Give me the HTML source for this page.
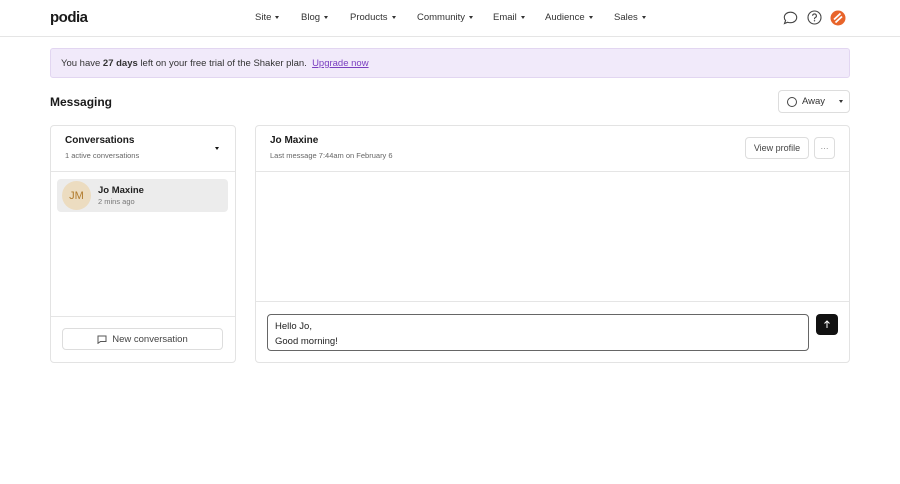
<!DOCTYPE html>
<html><head><meta charset="utf-8"><style>
*{box-sizing:border-box;margin:0;padding:0}
body{width:900px;height:484px;background:#fff;font-family:"Liberation Sans",sans-serif;color:#1a1a1a;position:relative;overflow:hidden}
.abs{position:absolute}
.nav{font-size:9.5px;color:#333;top:12px}
.car{display:inline-block;width:0;height:0;border-left:2.5px solid transparent;border-right:2.5px solid transparent;border-top:3px solid #333;margin-left:4px;vertical-align:middle}
.panel{border:1px solid #e3e3e3;border-radius:4px;background:#fff}
.btn{border:1px solid #ddd;border-radius:4px;background:#fff;font-size:9px;color:#444;display:flex;align-items:center;justify-content:center}
</style></head><body>
<div class="abs" style="left:50px;top:9px;font-size:15px;font-weight:bold;letter-spacing:-0.5px">podia</div>
<div class="abs nav" style="left:255px">Site<span class="car"></span></div>
<div class="abs nav" style="left:301px">Blog<span class="car"></span></div>
<div class="abs nav" style="left:350px">Products<span class="car"></span></div>
<div class="abs nav" style="left:417px">Community<span class="car"></span></div>
<div class="abs nav" style="left:493px">Email<span class="car"></span></div>
<div class="abs nav" style="left:545px">Audience<span class="car"></span></div>
<div class="abs nav" style="left:614px">Sales<span class="car"></span></div>
<svg class="abs" style="left:783px;top:11px" width="15" height="14" viewBox="0 0 15 14"><path d="M7.5 1.2C4 1.2 1.3 3.5 1.3 6.4c0 1.2.5 2.3 1.3 3.1L1.5 12.5l3.2-1.3c.9.4 1.8.5 2.8.5 3.5 0 6.2-2.3 6.2-5.2S11 1.2 7.5 1.2z" fill="none" stroke="#444" stroke-width="1.1"/></svg>
<svg class="abs" style="left:807px;top:10px" width="15" height="15" viewBox="0 0 15 15"><circle cx="7.5" cy="7.5" r="6.5" fill="none" stroke="#444" stroke-width="1.1"/><path d="M5.6 5.8a1.9 1.9 0 1 1 2.6 1.8c-.5.2-.7.6-.7 1.1v.6" fill="none" stroke="#444" stroke-width="1.1"/><circle cx="7.5" cy="10.8" r=".7" fill="#444"/></svg>
<svg class="abs" style="left:830px;top:10px" width="16" height="16" viewBox="0 0 16 16"><circle cx="8" cy="8" r="7.5" fill="#e8642a"/><path d="M10.5 3.5L4 9.5M12 6.5L5.5 12.5" stroke="#fff" stroke-width="1.8"/></svg>
<div class="abs" style="left:0;top:36px;width:900px;height:1px;background:#e5e5e5"></div>
<div class="abs" style="left:50px;top:48px;width:800px;height:30px;background:#f1eafa;border:1px solid #e2d6f1;border-radius:3px;font-size:9.5px;color:#333;padding:9px 0 0 10px">You have <b>27 days</b> left on your free trial of the Shaker plan. &nbsp;<span style="color:#7a3fc0;text-decoration:underline">Upgrade now</span></div>
<div class="abs" style="left:50px;top:95px;font-size:12px;font-weight:bold">Messaging</div>
<div class="abs btn" style="left:778px;top:90px;width:72px;height:23px;justify-content:flex-start;padding-left:8px;font-size:9.5px;color:#333"><span style="width:10px;height:10px;border:1px solid #444;border-radius:50%;margin-right:5px"></span>Away<span class="car" style="margin-left:14px"></span></div>
<div class="abs panel" style="left:50px;top:125px;width:186px;height:238px"></div>
<div class="abs" style="left:65px;top:135px;font-size:10px;font-weight:bold">Conversations</div>
<div class="abs" style="left:65px;top:151px;font-size:7.5px;color:#666">1 active conversations</div>
<span class="abs car" style="left:215px;top:147px;margin:0;border-top-color:#111"></span>
<div class="abs" style="left:51px;top:171px;width:184px;height:1px;background:#e5e5e5"></div>
<div class="abs" style="left:57px;top:179px;width:171px;height:33px;background:#ececec;border-radius:4px"></div>
<div class="abs" style="left:62px;top:181px;width:29px;height:29px;border-radius:50%;background:#ecdcc0;color:#b07a2c;font-size:11px;display:flex;align-items:center;justify-content:center">JM</div>
<div class="abs" style="left:98px;top:185px;font-size:9.5px;font-weight:bold;color:#222">Jo Maxine</div>
<div class="abs" style="left:98px;top:197px;font-size:7.5px;color:#777">2 mins ago</div>
<div class="abs" style="left:51px;top:316px;width:184px;height:1px;background:#e5e5e5"></div>
<div class="abs btn" style="left:62px;top:328px;width:161px;height:22px;font-size:9.5px"><svg width="10" height="9" viewBox="0 0 10 9" style="margin-right:5px"><path d="M1 1h8v5.5H3.5L1 8.3z" fill="none" stroke="#555" stroke-width="1"/></svg>New conversation</div>
<div class="abs panel" style="left:255px;top:125px;width:595px;height:238px"></div>
<div class="abs" style="left:270px;top:135px;font-size:10px;font-weight:bold">Jo Maxine</div>
<div class="abs" style="left:270px;top:151px;font-size:7.5px;color:#666">Last message 7:44am on February 6</div>
<div class="abs btn" style="left:745px;top:137px;width:64px;height:22px">View profile</div>
<div class="abs btn" style="left:814px;top:137px;width:21px;height:22px;font-size:8px;color:#777">···</div>
<div class="abs" style="left:256px;top:171px;width:593px;height:1px;background:#e5e5e5"></div>
<div class="abs" style="left:256px;top:301px;width:593px;height:1px;background:#e5e5e5"></div>
<div class="abs" style="left:267px;top:314px;width:542px;height:37px;border:1.5px solid #666;border-radius:4px;font-size:9.5px;color:#222;padding:4px 0 0 7px;line-height:15px">Hello Jo,<br>Good morning!</div>
<div class="abs" style="left:816px;top:314px;width:22px;height:21px;background:#111;border-radius:4px;display:flex;align-items:center;justify-content:center"><svg width="8" height="9" viewBox="0 0 8 9"><path d="M4 8V1M1.5 3.5L4 1l2.5 2.5" stroke="#fff" stroke-width="1" fill="none"/></svg></div>
</body></html>
